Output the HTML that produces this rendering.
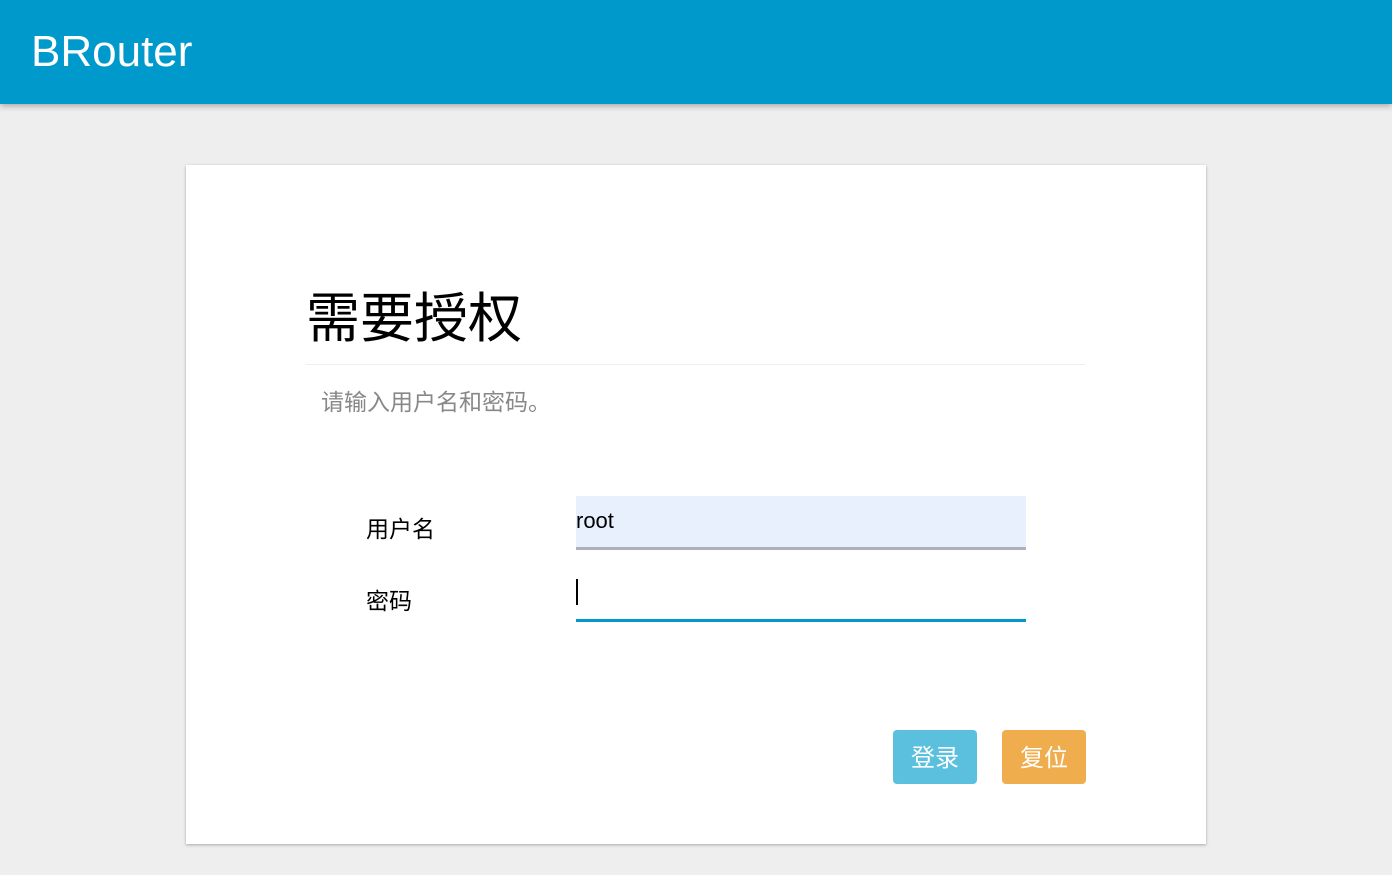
<!DOCTYPE html>
<html><head><meta charset="utf-8"><style>
body{margin:0;width:1392px;height:875px;background:#eeeeee;font-family:"Liberation Sans","Noto Sans CJK SC",sans-serif;position:relative;overflow:hidden}
.hdr{position:absolute;left:0;top:0;width:1392px;height:104px;background:#0099cc;box-shadow:0 2px 6px rgba(0,0,0,.3)}
.hdr span{position:absolute;left:31px;top:24px;color:#fff;font-size:44px;line-height:56px}
.card{position:absolute;left:186px;top:165px;width:1020px;height:679px;background:#fff;box-shadow:0 1px 3px rgba(0,0,0,.3)}
.t{position:absolute;left:120px;top:119px;font-size:54px;line-height:70px;color:#000}
.hr{position:absolute;left:120px;top:199px;width:779px;height:1px;background:#eee}
.d{position:absolute;left:135px;top:218px;font-size:23px;color:#888}
.l{position:absolute;left:180px;font-size:23px;color:#000}
.in{position:absolute;left:390px;width:450px;height:51px}
.b{position:absolute;top:565px;width:84px;height:54px;border-radius:4px;color:#fff;font-size:24px;line-height:58px;text-align:center}
</style></head><body>
<div class="hdr"><span>BRouter</span></div>
<div class="card">
<div class="t">需要授权</div>
<div class="hr"></div>
<div class="d">请输入用户名和密码。</div>
<div class="l" style="top:345px">用户名</div>
<div class="in" style="top:331px;background:#e8f0fe;border-bottom:3px solid #b0b0bc;height:51px"><span style="position:absolute;left:0;top:12px;font-size:22px">root</span></div>
<div class="l" style="top:417px">密码</div>
<div class="in" style="top:403px;border-bottom:3px solid #0099cc;height:51px"><span style="position:absolute;left:0;top:11px;width:2px;height:26px;background:#000"></span></div>
<div class="b" style="left:707px;background:#5bc0de">登录</div>
<div class="b" style="left:816px;background:#f0ad4e">复位</div>
</div>
</body></html>
